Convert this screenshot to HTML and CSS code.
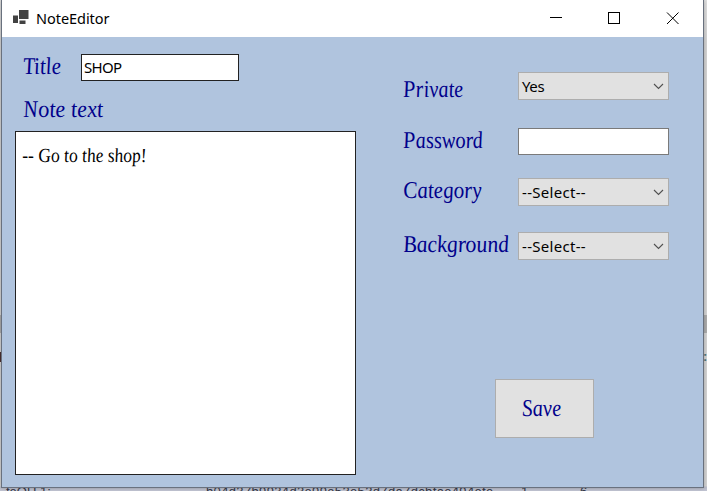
FILE: index.html
```html
<!DOCTYPE html>
<html lang="en">
<head>
<meta charset="utf-8">
<title>NoteEditor</title>
<link rel="stylesheet" href="styles.css">
</head>
<body>
<div class="backdrop">
  <span class="edge edge-scroll"></span>
  <span class="edge edge-mark"></span>
  <span class="edge edge-colon">:</span>
  <span class="behind behind-a">feOU 1:</span>
  <span class="behind behind-b">b04d37b9934d3e99e53e53d7da7dcbfae494efe</span>
  <span class="behind behind-c">1</span>
  <span class="behind behind-d">6</span>
</div>
<main class="window">
  <header class="titlebar">
    <svg class="app-icon" width="16" height="15" viewBox="0 0 16 15"><path fill="#424242" d="M6 0h9.500v9H6zM0 5.500h5v7.500H0zM6.500 10.500h6v3.500h-6z"/></svg>
    <span class="caption">NoteEditor</span>
    <svg class="controls" width="130" height="13" viewBox="0 0 130 13" fill="none" stroke="#000"><path shape-rendering="crispEdges" d="M0 5.5h12M58.5.5h11v11h-11z"/><path d="M117 .5l11.5 11.5M128.500 .5L117 12"/></svg>
  </header>
  <div class="client">
    <section class="note">
      <div class="title-row"><label class="script s-title">Title</label><div class="input title-input"><span class="ui">SHOP</span></div></div>
      <label class="script note-label">Note text</label>
      <div class="textarea"><span class="script note-text">-- Go to the shop!</span></div>
    </section>
    <section class="options">
      <div class="row row-private"><label class="script">Private</label><div class="select"><span class="ui">Yes</span><svg width="11" height="7" viewBox="0 0 11 7"><path d="M1 1l4.500 4.500L10 1" fill="none" stroke="#505050" stroke-width="1.1"/></svg></div></div>
      <div class="row row-password"><label class="script">Password</label><div class="input password"></div></div>
      <div class="row row-category"><label class="script">Category</label><div class="select"><span class="ui wide">--Select--</span><svg width="11" height="7" viewBox="0 0 11 7"><path d="M1 1l4.500 4.500L10 1" fill="none" stroke="#505050" stroke-width="1.1"/></svg></div></div>
      <div class="row row-background"><label class="script">Background</label><div class="select"><span class="ui wide">--Select--</span><svg width="11" height="7" viewBox="0 0 11 7"><path d="M1 1l4.500 4.500L10 1" fill="none" stroke="#505050" stroke-width="1.1"/></svg></div></div>
      <div class="save"><span class="script">Save</span></div>
    </section>
  </div>
</main>
</body>
</html>
```
FILE: styles.css
```css
* { box-sizing: border-box; }
body { margin: 0; width: 707px; height: 491px; overflow: hidden; position: relative; background: #d3d3d3; }
.backdrop { position: absolute; inset: 0; overflow: hidden; background: linear-gradient(#e0e0e0 0, #d4d4d4 40px, #d4d4d4 486px, #babdcb 487px, #c2c5d3 491px); }
.edge { position: absolute; }
.edge-scroll { left: 0; top: 315px; width: 707px; height: 18px; background: #acacac; }
.edge-mark { left: 0; top: 352px; width: 2px; height: 10px; background: #4c3030; }
.edge-colon { left: 703px; top: 349px; font: bold 13px/16px "Liberation Sans", sans-serif; color: #4f7476; }
.behind { position: absolute; top: 484px; font: 13px/16px "Liberation Sans", sans-serif; color: #333746; white-space: nowrap; }
.behind-a { left: 6px; }
.behind-b { left: 206px; letter-spacing: .35px; }
.behind-c { left: 521px; }
.behind-d { left: 580px; }
.window { position: relative; margin-left: 1px; width: 703px; height: 488px; border: 1px solid #69717e; border-top: 0; background: #b0c4de; box-shadow: 0 0 4px rgba(0,0,0,.25); }
.titlebar { display: flex; height: 37px; background: #fff; padding: 0 23px 0 11px; align-items: flex-start; }
.app-icon { margin-top: 10px; }
.caption { margin: 8px 0 0 7px; font: 14.5px/20px "Noto Sans", sans-serif; letter-spacing: -.05px; color: #000; }
.controls { margin: 12px 0 0 auto; }
.client { display: flex; height: 450px; }
.script { display: inline-block; font: italic 24px/28px "Liberation Serif", serif; color: #00008b; white-space: nowrap; transform: skewX(6deg) scaleX(.89); transform-origin: 0 50%; }
.ui { font: 15px/20px "Noto Sans", sans-serif; letter-spacing: -.4px; color: #000; }
.ui.wide { letter-spacing: .3px; }
.note { width: 354px; padding: 17px 0 0 13px; }
.title-row { display: flex; height: 27px; }
.title-row .script { width: 58px; margin: -2px 0 0 8px; flex: none; }
.input { display: flex; align-items: center; height: 27px; border: 1px solid #7a7a7a; background: #fff; }
.title-input { width: 158px; border-color: #222; padding: 0 0 2px 2px; }
.title-input .ui { letter-spacing: -.7px; }
.note-label { display: block; margin: 14px 0 8px 8px; transform: skewX(6deg) scaleX(.93); }
.textarea { width: 341px; height: 344px; border: 1px solid #222; background: #fff; padding: 9px 6px; }
.note-text { font-size: 20px; color: #000; transform: skewX(6deg) scaleX(.875); }
.options { width: 347px; padding: 35px 0 0 47px; }
.row { display: flex; align-items: flex-start; }
.row .script { width: 115px; flex: none; }
.row-private { height: 56px; }
.row-private .script { margin-top: 3px; transform: skewX(6deg) scaleX(.85); }
.row-password { height: 50px; }
.row-password .script { margin-top: -2px; transform: skewX(6deg) scaleX(.85); }
.row-category { height: 54px; }
.row-category .script { margin-top: -2px; transform: skewX(6deg) scaleX(.88); }
.row-background .script { margin-top: -2px; transform: skewX(6deg) scaleX(.91); }
.select { display: flex; align-items: center; justify-content: space-between; width: 151px; height: 28px; border: 1px solid #adadad; background: #e1e1e1; padding: 0 4px 0 3px; }
.password { width: 151px; }
.save { display: flex; align-items: center; width: 99px; height: 59px; margin: 119px 0 0 92px; padding: 0 0 2px 26px; border: 1px solid #adadad; background: #e1e1e1; }
.save .script { transform: skewX(6deg) scaleX(.86); }
```
